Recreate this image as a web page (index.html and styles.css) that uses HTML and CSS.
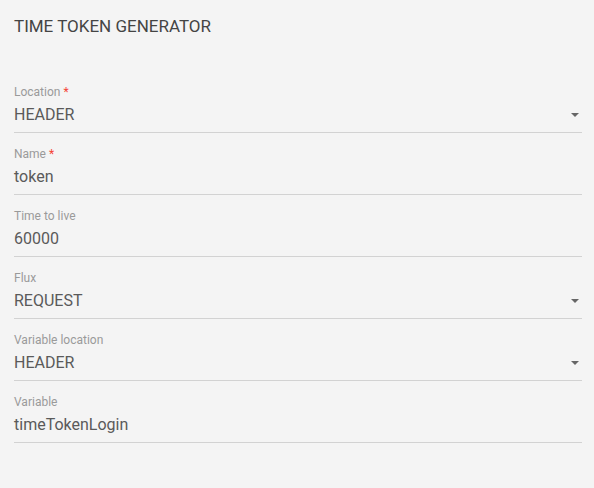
FILE: index.html
```html
<!DOCTYPE html>
<html>
<head>
<meta charset="utf-8">
<link rel="stylesheet" href="styles.css">
</head>
<body>
<div class="page">
  <h1 class="title">TIME TOKEN GENERATOR</h1>
  <form class="form">
    <div class="field select">
      <label class="label">Location <span class="req">*</span></label>
      <div class="control"><span class="value">HEADER</span><span class="caret"></span></div>
    </div>
    <div class="field">
      <label class="label">Name <span class="req">*</span></label>
      <div class="control"><span class="value">token</span></div>
    </div>
    <div class="field">
      <label class="label">Time to live</label>
      <div class="control"><span class="value">60000</span></div>
    </div>
    <div class="field select">
      <label class="label">Flux</label>
      <div class="control"><span class="value">REQUEST</span><span class="caret"></span></div>
    </div>
    <div class="field select">
      <label class="label">Variable location</label>
      <div class="control"><span class="value">HEADER</span><span class="caret"></span></div>
    </div>
    <div class="field">
      <label class="label">Variable</label>
      <div class="control"><span class="value">timeTokenLogin</span></div>
    </div>
  </form>
</div>
</body>
</html>
```
FILE: styles.css
```css
html, body {
  margin: 0;
  padding: 0;
  background: #f4f4f4;
  font-family: Roboto, "Liberation Sans", sans-serif;
}
.page {
  padding: 16px 12px 0 14px;
}
.title {
  margin: 0;
  font-size: 17px;
  font-weight: 400;
  line-height: 20px;
  color: #444;
}
.form {
  margin-top: 49px;
  display: flex;
  flex-direction: column;
}
.field {
  padding-top: 14px;
  border-bottom: 1px solid #d2d2d2;
}
.field:first-child { padding-top: 0; }
.label {
  display: block;
  font-size: 12px;
  line-height: 14px;
  color: #9a9a9a;
}
.req { color: #f44336; }
.control {
  display: flex;
  align-items: center;
  justify-content: space-between;
  margin-top: 6px;
  padding-bottom: 7px;
  height: 20px;
}
.value {
  font-size: 16px;
  line-height: 20px;
  color: #5a5a5a;
}
.caret {
  width: 0;
  height: 0;
  border-left: 4px solid transparent;
  border-right: 4px solid transparent;
  border-top: 4px solid #666;
  margin-right: 3px;
}
```
